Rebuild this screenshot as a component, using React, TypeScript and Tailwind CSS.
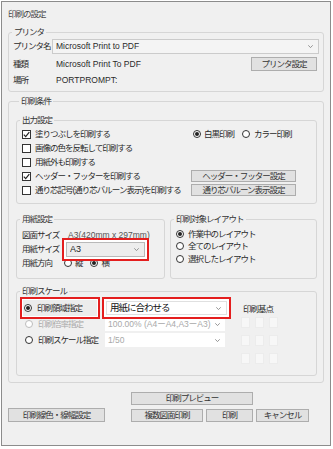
import { ReactNode } from "react";

const Box = ({
  title,
  className = "",
  children,
}: {
  title: string;
  className?: string;
  children: ReactNode;
}) => {
  return (
    <fieldset
      className={`min-w-0 border border-[#d6d6d6] rounded-[3px] ${className}`}
    >
      <legend className="ml-[3px] px-[2px] leading-[12px] text-[#333]">
        {title}
      </legend>
      {children}
    </fieldset>
  );
};

const Check = ({ on }: { on?: boolean }) => (
  <span className="w-[9px] h-[9px] shrink-0 border border-[#333] bg-white flex items-center justify-center">
    {on && (
      <svg width="7" height="7" viewBox="0 0 7 7">
        <polyline
          points="0.8,3.6 2.7,5.6 6.3,1.2"
          fill="none"
          stroke="#222"
          strokeWidth="1.2"
        />
      </svg>
    )}
  </span>
);

const Radio = ({ on, dim }: { on?: boolean; dim?: boolean }) => (
  <span
    className={`w-[8px] h-[8px] shrink-0 rounded-full border bg-white flex items-center justify-center ${
      dim ? "border-[#bcbcbc]" : "border-[#333]"
    }`}
  >
    {on && <span className="w-[4px] h-[4px] rounded-full bg-[#222]" />}
  </span>
);

const Btn = ({ label, className = "" }: { label: string; className?: string }) => (
  <div
    className={`border border-[#adadad] bg-[#e1e1e1] flex items-center justify-center whitespace-nowrap text-[#333] ${className}`}
  >
    {label}
  </div>
);

const Chevron = () => (
  <svg width="5" height="3" viewBox="0 0 5 3" className="shrink-0">
    <polyline points="0.3,0.3 2.5,2.6 4.7,0.3" fill="none" stroke="#8a8a8a" strokeWidth="0.9" />
  </svg>
);

const Select = ({
  text,
  className = "",
  textClass = "",
}: {
  text: string;
  className?: string;
  textClass?: string;
}) => (
  <div className={`flex items-center pl-[3px] pr-[5px] ${className}`}>
    <span className={`flex-1 whitespace-nowrap overflow-hidden ${textClass}`}>{text}</span>
    <Chevron />
  </div>
);

export default function App() {
  return (
    <div className="w-[333px] h-[449px] bg-white pt-[1px] pl-[1px] font-['Liberation_Sans','Noto_Sans_CJK_JP',sans-serif] text-[8.5px] text-[#2a2a2a] whitespace-nowrap">
      <div className="w-[330px] h-[445px] border border-[#8c8c8c] bg-[#f0f0f0] px-[6px] overflow-hidden">
        <div className="mt-[6px] h-[12px] leading-[12px] text-[#444] tracking-[-1px]">印刷の設定</div>

        <Box title="プリンタ" className="mt-[6px] pb-[5px] pr-[3px] tracking-[-1px]">
          <div className="mt-[1px] h-[15px] flex items-center">
            <span className="w-[43px] pl-[4px]">プリンタ名</span>
            <Select
              text="Microsoft Print to PDF"
              className="w-[267px] h-[15px] border border-[#cbcbcb] bg-[#f4f4f4]"
              textClass="tracking-normal"
            />
          </div>
          <div className="mt-[3px] h-[14px] flex items-center">
            <span className="w-[43px] pl-[4px]">種類</span>
            <span className="flex-1 pl-[4px] tracking-normal">Microsoft Print To PDF</span>
            <Btn label="プリンタ設定" className="w-[66px] h-[14px] mr-[3px]" />
          </div>
          <div className="mt-[3px] h-[12px] flex items-center">
            <span className="w-[43px] pl-[4px]">場所</span>
            <span className="pl-[4px] tracking-normal">PORTPROMPT:</span>
          </div>
        </Box>

        <Box title="印刷条件" className="mt-[3px] pl-[7px] pr-[6px] pb-[6px] tracking-[-1px]">
          <Box title="出力設定" className="mt-[7px] pt-[1px] pb-[6px]">
            <div className="h-[14px] flex items-center">
              <div className="w-[174px] pl-[5px] flex items-center gap-[4px]">
                <Check on />
                <span>塗りつぶしを印刷する</span>
              </div>
              <div className="ml-[2px] flex items-center">
                <Radio on />
                <span className="ml-[3px] w-[38px]">白黒印刷</span>
                <Radio />
                <span className="ml-[4px]">カラー印刷</span>
              </div>
            </div>
            <div className="h-[14px] pl-[5px] flex items-center gap-[4px]">
              <Check />
              <span>画像の色を反転して印刷する</span>
            </div>
            <div className="h-[14px] pl-[5px] flex items-center gap-[4px]">
              <Check />
              <span>用紙外も印刷する</span>
            </div>
            <div className="h-[14px] flex items-center">
              <div className="w-[174px] pl-[5px] flex items-center gap-[4px]">
                <Check on />
                <span>ヘッダー・フッターを印刷する</span>
              </div>
              <Btn label="ヘッダー・フッター設定" className="w-[105px] h-[12px]" />
            </div>
            <div className="h-[14px] flex items-center">
              <div className="w-[174px] pl-[5px] flex items-center gap-[4px]">
                <Check />
                <span>通り芯記号(通り芯バルーン表示)を印刷する</span>
              </div>
              <Btn label="通り芯バルーン表示設定" className="w-[105px] h-[12px]" />
            </div>
          </Box>

          <div className="mt-[9px] flex gap-[5px]">
            <Box title="用紙設定" className="w-[149px] pb-[9px]">
              <div className="mt-[4px] h-[12px] pl-[5px] flex items-center">
                <span className="w-[46px]">図面サイズ</span>
                <span className="tracking-normal text-[#555]">A3(420mm x 297mm)</span>
              </div>
              <div className="mt-[1px] h-[15px] pl-[5px] flex items-center">
                <span className="w-[40px]">用紙サイズ</span>
                <div className="relative z-10 -my-[4px] border-2 border-[#e41e1e] bg-white p-[2px]">
                  <Select
                    text="A3"
                    className="w-[79px] h-[15px] border border-[#b9b9b9] bg-[#ededed]"
                    textClass="tracking-normal text-[9px] text-[#222]"
                  />
                </div>
              </div>
              <div className="h-[12px] pl-[5px] flex items-center">
                <span className="w-[42px]">用紙方向</span>
                <Radio />
                <span className="ml-[3px]">縦</span>
                <span className="ml-[7px]">
                  <Radio on />
                </span>
                <span className="ml-[4px]">横</span>
              </div>
            </Box>
            <Box title="印刷対象レイアウト" className="flex-1">
              <div className="mt-[3px] h-[12px] pl-[5px] flex items-center gap-[4px]">
                <Radio on />
                <span>作業中のレイアウト</span>
              </div>
              <div className="h-[12px] pl-[5px] flex items-center gap-[4px]">
                <Radio />
                <span>全てのレイアウト</span>
              </div>
              <div className="mt-[1px] h-[12px] pl-[5px] flex items-center gap-[4px]">
                <Radio />
                <span>選択したレイアウト</span>
              </div>
            </Box>
          </div>

          <Box title="印刷スケール" className="mt-[6px] pb-[11px]">
            <div className="flex">
              <div className="pt-[4px] flex flex-col gap-[2px]">
                <div className="h-[14px] flex items-center">
                  <div className="relative z-10 ml-[3px] -my-[4px] w-[80px] h-[22px] border-2 border-[#e41e1e] bg-white p-[1px]">
                    <div className="h-full bg-[#ececec] pl-[1px] flex items-center gap-[5px]">
                      <Radio on />
                      <span>印刷領域指定</span>
                    </div>
                  </div>
                  <div className="relative z-10 ml-[2px] -my-[4px] w-[129px] border-2 border-[#e41e1e] bg-white p-[2px]">
                    <Select
                      text="用紙に合わせる"
                      className="h-[14px] border border-[#e0e0e0] bg-white"
                      textClass="text-[9.5px] text-[#111] tracking-[-1px]"
                    />
                  </div>
                </div>
                <div className="h-[14px] flex items-center">
                  <div className="w-[83px] pl-[8px] flex items-center gap-[5px]">
                    <Radio dim />
                    <span className="text-[#a9a9a9]">印刷倍率指定</span>
                  </div>
                  <Select
                    text="100.00% (A4ーA4,A3ーA3)"
                    className="ml-[5px] w-[120px] h-[14px] bg-white"
                    textClass="tracking-normal text-[#a9a9a9]"
                  />
                </div>
                <div className="h-[14px] flex items-center">
                  <div className="w-[83px] pl-[8px] flex items-center gap-[5px]">
                    <Radio />
                    <span>印刷スケール指定</span>
                  </div>
                  <Select
                    text="1/50"
                    className="ml-[5px] w-[120px] h-[14px] bg-white"
                    textClass="tracking-normal text-[#a9a9a9]"
                  />
                </div>
              </div>
              <div className="ml-[10px] pt-[6px]">
                <div className="h-[12px] leading-[12px] pl-[2px]">印刷基点</div>
                <div className="mt-[2px] grid grid-cols-[9px_9px_9px] gap-x-[5px] gap-y-[7px]">
                  {Array.from({ length: 9 }).map((_, i) => (
                    <div key={i} className="h-[11px] bg-[#f7f7f7] border border-[#ececec]" />
                  ))}
                </div>
              </div>
            </div>
          </Box>
        </Box>

        <div className="mt-[9px] flex items-end tracking-[-1px]">
          <Btn label="印刷線色・線幅設定" className="w-[97px] h-[14px]" />
          <div className="ml-[26px] flex flex-col gap-[4px]">
            <Btn label="印刷プレビュー" className="w-[122px] h-[13px]" />
            <div className="flex gap-[3px]">
              <Btn label="複数図面印刷" className="w-[72px] h-[13px]" />
              <Btn label="印刷" className="w-[47px] h-[13px]" />
              <Btn label="キャンセル" className="w-[53px] h-[13px]" />
            </div>
          </div>
        </div>
      </div>
    </div>
  );
}
